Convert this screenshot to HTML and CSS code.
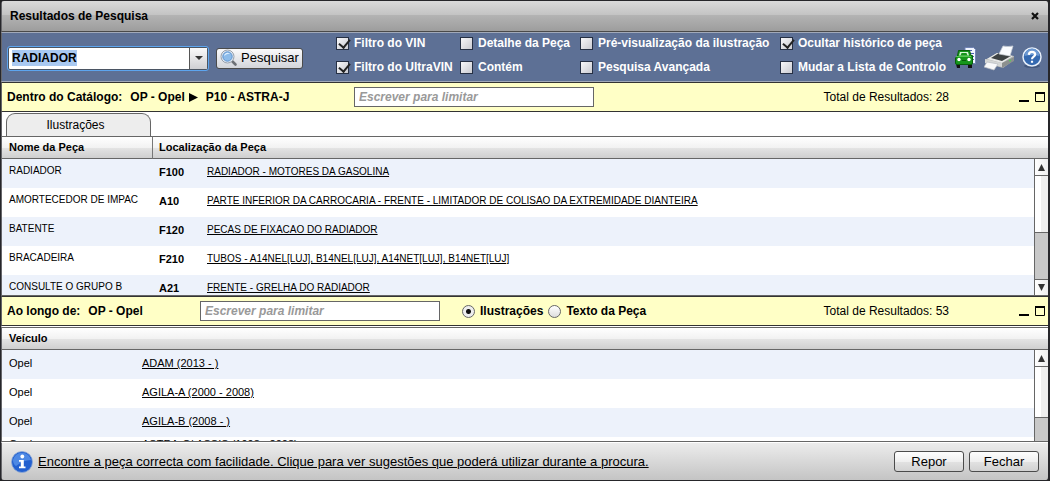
FILE: index.html
```html
<!DOCTYPE html>
<html lang="pt">
<head>
<meta charset="utf-8">
<title>Resultados de Pesquisa</title>
<link rel="stylesheet" href="styles.css">
</head>
<body>
<main class="dialog">
  <header class="titlebar">
    <h1 class="title">Resultados de Pesquisa</h1>
    <button class="icon-button" aria-label="Fechar janela">
      <svg width="8" height="8" viewBox="0 0 8 8"><path d="M1 1L7 7M7 1L1 7" stroke="#111" stroke-width="2.2"/></svg>
    </button>
  </header>

  <form class="toolbar">
    <div class="combo">
      <input class="combo-input" id="query" type="text" value="RADIADOR" aria-label="Pesquisa">
      <button class="combo-arrow" type="button" aria-label="Abrir lista">
        <svg width="8" height="4" viewBox="0 0 8 4"><path d="M0 0H8L4 4Z" fill="#333"/></svg>
      </button>
    </div>
    <button class="button search-button" type="button">
      <svg width="18" height="18" viewBox="0 0 18 18">
        <path d="M12 12L15.500 15.500" stroke="#6d7075" stroke-width="2.600" stroke-linecap="round"/>
        <circle cx="7.500" cy="7.500" r="6.500" fill="#e8edf3" stroke="#98a1ac"/>
        <circle cx="7.500" cy="7.500" r="4.700" fill="#8dbcea" stroke="#5c91cd"/>
        <path d="M4 7a3.600 3.600 0 0 1 6-2.400Q6.500 5 4 7Z" fill="#dceeff"/>
      </svg>
      Pesquisar
    </button>
    <div class="filters">
      <label class="choice"><input class="check" type="checkbox" checked>Filtro do VIN</label>
      <label class="choice"><input class="check" type="checkbox">Detalhe da Peça</label>
      <label class="choice"><input class="check" type="checkbox">Pré-visualização da ilustração</label>
      <label class="choice"><input class="check" type="checkbox" checked>Ocultar histórico de peça</label>
      <label class="choice"><input class="check" type="checkbox" checked>Filtro do UltraVIN</label>
      <label class="choice"><input class="check" type="checkbox">Contém</label>
      <label class="choice"><input class="check" type="checkbox">Pesquisa Avançada</label>
      <label class="choice"><input class="check" type="checkbox">Mudar a Lista de Controlo</label>
    </div>
    <div class="tools">
      <button class="icon-button" type="button" aria-label="Veículo">
        <svg width="22" height="22" viewBox="0 0 22 22">
          <path d="M10 0.500H18.500L20.500 2.500V16.500H10Z" fill="#f1f5ff" stroke="#7183b5"/>
          <path d="M12 3.500H17M15 6.500H19M17 9.500H19M18 12.500H19" stroke="#4964ad"/>
          <path d="M1 17H5V21H2ZM13 17H17V21H13Z" fill="#111"/>
          <path d="M3.500 3.500H14.500L16 8.500H17.500V16Q17.500 17.500 16 17.500H2Q0.500 17.500 0.500 16V11L2.500 9Z" fill="#16961b" stroke="#075f0a"/>
          <path d="M5 5H13L14 8.500H4Z" fill="#d8f6d7"/>
          <path d="M6.500 6H11.500L12.500 8.500H5.500Z" fill="#16961b"/>
          <path d="M1 9.500H16" stroke="#52ca4e"/>
          <circle cx="4" cy="12.500" r="1.700" fill="#fff"/><circle cx="14" cy="12.500" r="1.700" fill="#fff"/>
          <path d="M7 13.500H11" stroke="#075f0a"/>
        </svg>
      </button>
      <button class="icon-button" type="button" aria-label="Imprimir">
        <svg width="31" height="26" viewBox="0 0 31 26">
          <path d="M1 15L13 8L30 11V15L19 23L1 18Z" fill="#b3b5b4"/>
          <path d="M3 14L13 8L29 11L18 18Z" fill="#e8e9e8"/>
          <path d="M7 13L15 8L27 11L18 16Z" fill="#3d4244"/>
          <path d="M15 9L19 1Q24 2 29 1L26 11Z" fill="#fafcff" stroke="#c9ced6" stroke-width="0.700"/>
          <path d="M18 18L30 12V16L18 23Z" fill="#8c908e"/>
          <path d="M1 14L18 18V22L1 18Z" fill="#d5d7d6"/>
          <path d="M3 17L14 19L10 25L0 22Z" fill="#f8f9fa" stroke="#b7bcc2" stroke-width="0.700"/>
          <circle cx="26" cy="15.500" r="1" fill="#57ca5c"/>
        </svg>
      </button>
      <button class="icon-button" type="button" aria-label="Ajuda">
        <svg width="20" height="22" viewBox="0 0 20 22">
          <ellipse cx="10" cy="19" rx="8" ry="2" fill="#43587e"/>
          <circle cx="10" cy="10" r="9" fill="#3569b0" stroke="#e7effa" stroke-width="1.500"/>
          <path d="M2.500 9a7.500 7.500 0 0 1 15 0Q10 7 2.500 9Z" fill="#6b98d2"/>
          <path d="M6.800 7.800Q7 4.900 10 4.900T13.200 7.500C13.200 9.700 10 9.700 10 12.200M10 13.800V15.800" fill="none" stroke="#fff" stroke-width="2.200"/>
        </svg>
      </button>
    </div>
  </form>

  <section class="scope">
    <div class="crumbs crumbs-wide">
      <span class="scope-name">Dentro do Catálogo:</span>
      <span>OP - Opel</span>
      <svg class="crumb-arrow" width="9" height="9" viewBox="0 0 9 9"><path d="M0 0L9 4.500L0 9Z" fill="#000"/></svg>
      <span>P10 - ASTRA-J</span>
    </div>
    <input class="limit" type="text" placeholder="Escrever para limitar" aria-label="Limitar resultados do catálogo">
    <p class="total">Total de Resultados: 28</p>
    <div class="pane-buttons">
      <button class="icon-button" aria-label="Minimizar"><svg width="10" height="10" viewBox="0 0 10 10"><path d="M0 9H10" stroke="#000" stroke-width="2"/></svg></button>
      <button class="icon-button" aria-label="Maximizar"><svg width="10" height="10" viewBox="0 0 10 10"><path d="M.5 1V9.500H9.500V1" fill="none" stroke="#000"/><path d="M0 1H10" stroke="#000" stroke-width="2"/></svg></button>
    </div>
  </section>

  <nav class="tabs"><button class="tab">Ilustrações</button></nav>

  <section class="pane parts-pane">
    <div class="pane-body">
      <table class="grid parts">
        <colgroup><col class="col-name"><col class="col-code"><col></colgroup>
        <thead><tr><th>Nome da Peça</th><th class="divided" colspan="2">Localização da Peça</th></tr></thead>
        <tbody>
          <tr><td class="name">RADIADOR</td><td class="code">F100</td><td><a href="#">RADIADOR - MOTORES DA GASOLINA</a></td></tr>
          <tr><td class="name">AMORTECEDOR DE IMPAC</td><td class="code">A10</td><td><a href="#">PARTE INFERIOR DA CARROCARIA - FRENTE - LIMITADOR DE COLISAO DA EXTREMIDADE DIANTEIRA</a></td></tr>
          <tr><td class="name">BATENTE</td><td class="code">F120</td><td><a href="#">PECAS DE FIXACAO DO RADIADOR</a></td></tr>
          <tr><td class="name">BRACADEIRA</td><td class="code">F210</td><td><a href="#">TUBOS - A14NEL[LUJ], B14NEL[LUJ], A14NET[LUJ], B14NET[LUJ]</a></td></tr>
          <tr><td class="name">CONSULTE O GRUPO B</td><td class="code">A21</td><td><a href="#">FRENTE - GRELHA DO RADIADOR</a></td></tr>
        </tbody>
      </table>
    </div>
    <div class="scroll">
      <div class="scroll-cap"></div>
      <button class="scroll-step" aria-label="Subir"><svg width="7" height="7" viewBox="0 0 7 7"><path d="M3.500 0L7 7H0Z" fill="#333"/></svg></button>
      <div class="scroll-track"><div class="scroll-thumb"></div></div>
      <button class="scroll-step last" aria-label="Descer"><svg width="7" height="7" viewBox="0 0 7 7"><path d="M3.500 7L0 0H7Z" fill="#333"/></svg></button>
    </div>
  </section>

  <section class="scope">
    <div class="crumbs">
      <span class="scope-name">Ao longo de:</span>
      <span>OP - Opel</span>
    </div>
    <input class="limit" type="text" placeholder="Escrever para limitar" aria-label="Limitar resultados de veículos">
    <div class="modes">
      <label class="choice"><input class="radio" type="radio" name="mode" checked>Ilustrações</label>
      <label class="choice"><input class="radio" type="radio" name="mode">Texto da Peça</label>
    </div>
    <p class="total">Total de Resultados: 53</p>
    <div class="pane-buttons">
      <button class="icon-button" aria-label="Minimizar"><svg width="10" height="10" viewBox="0 0 10 10"><path d="M0 9H10" stroke="#000" stroke-width="2"/></svg></button>
      <button class="icon-button" aria-label="Maximizar"><svg width="10" height="10" viewBox="0 0 10 10"><path d="M.5 1V9.500H9.500V1" fill="none" stroke="#000"/><path d="M0 1H10" stroke="#000" stroke-width="2"/></svg></button>
    </div>
  </section>

  <section class="pane vehicles-pane">
    <div class="pane-body">
      <table class="grid vehicles">
        <colgroup><col class="col-make"><col></colgroup>
        <thead><tr><th colspan="2">Veículo</th></tr></thead>
        <tbody>
          <tr><td>Opel</td><td><a href="#">ADAM (2013 - )</a></td></tr>
          <tr><td>Opel</td><td><a href="#">AGILA-A (2000 - 2008)</a></td></tr>
          <tr><td>Opel</td><td><a href="#">AGILA-B (2008 - )</a></td></tr>
          <tr class="tight"><td>Opel</td><td><a href="#">ASTRA-G| ASSIS (1998 - 2008)</a></td></tr>
        </tbody>
      </table>
    </div>
    <div class="scroll">
      <div class="scroll-cap"></div>
      <button class="scroll-step" aria-label="Subir"><svg width="7" height="7" viewBox="0 0 7 7"><path d="M3.500 0L7 7H0Z" fill="#333"/></svg></button>
      <div class="scroll-track"><div class="scroll-thumb short"></div></div>
    </div>
  </section>

  <footer class="footer">
    <svg width="22" height="22" viewBox="0 0 22 22">
      <circle cx="11" cy="11" r="10.500" fill="#2360cf" stroke="#8ea9d5" stroke-width="0.800"/>
      <path d="M2 9a9.200 9.200 0 0 1 18 0Q12 9 5 15Q2 13 2 9Z" fill="#4d88e4"/>
      <circle cx="11.300" cy="5.500" r="1.900" fill="#fff"/>
      <path d="M8 9H12.800V15.500H14.500V17.200H8V15.500H9.800V10.700H8Z" fill="#fff"/>
    </svg>
    <a class="hint" href="#">Encontre a peça correcta com facilidade. Clique para ver sugestões que poderá utilizar durante a procura.</a>
    <button class="button">Repor</button>
    <button class="button">Fechar</button>
  </footer>
</main>
<script src="app.js"></script>
</body>
</html>
```

FILE: styles.css
```css
* { box-sizing: border-box; }
body {
  margin: 0;
  background: #222;
  color: #000;
  font: 12px/16px "Liberation Sans", Arial, sans-serif;
}
button, input { font: inherit; color: inherit; margin: 0; }
button { padding: 0; }
svg { display: block; flex: none; }
a { color: inherit; }

.dialog {
  height: 100vh;
  display: flex;
  flex-direction: column;
  border: solid #26262a;
  border-width: 1px 2px 1px 1px;
  border-radius: 4px;
  overflow: hidden;
}
.dialog > * { flex: none; border-left: 1px solid #66666a; }
.icon-button { display: flex; border: 0; background: none; }

.titlebar {
  height: 31px;
  display: flex;
  align-items: center;
  justify-content: space-between;
  padding: 0 9px 0 8px;
  background: linear-gradient(#dadada, #c4c4c4 45%, #b4b4b4 46%, #9d9d9d);
  border-bottom: 1px solid #4a4a4a;
}
.title { margin: 0; font-size: 12px; }

.toolbar {
  height: 50px;
  display: flex;
  align-items: center;
  padding: 0 6px;
  background: #5d7095;
  border-top: 1px solid #a1a9b9;
  border-bottom: 1px solid #a1a9b9;
}
.combo {
  width: 200px;
  height: 23px;
  display: flex;
  margin: 2px 8px 0 0;
  background: #fff;
  border: 1px solid #4b5563;
  outline: 1px solid #5da5ef;
  border-radius: 2px;
}
.combo-input {
  flex: 1;
  min-width: 0;
  padding: 0 3px;
  border: 0;
  outline: 0;
  background: none;
  font-weight: bold;
  caret-color: transparent;
}
.combo-input::selection { background: #a9c9f1; color: #000; }
.combo-arrow {
  width: 18px;
  display: flex;
  align-items: center;
  justify-content: center;
  border: 0;
  border-left: 1px solid #555;
  background: linear-gradient(#fafafa, #cfcfd3);
}
.button {
  height: 21px;
  display: flex;
  align-items: center;
  justify-content: center;
  font-size: 13px;
  border: 1px solid #4b4b4b;
  border-radius: 3px;
  background: linear-gradient(#fdfdfd, #efefef 50%, #e2e2e2 51%, #d2d2d2);
}
.search-button {
  width: 87px;
  gap: 3px;
  margin: 2px 33px 0 0;
  background: linear-gradient(#fafafb, #d3d5da);
}
.filters {
  flex: 1;
  display: grid;
  grid-template-columns: 124px 120px 200px 1fr;
  row-gap: 8px;
  margin-bottom: 4px;
  color: #fff;
}
.choice { display: flex; align-items: center; gap: 5px; font-weight: bold; white-space: nowrap; }
.check {
  appearance: none;
  flex: none;
  width: 13px;
  height: 13px;
  border: 1px solid #263044;
  background: linear-gradient(135deg, #f7f7f9, #cacbd1);
}
.check:checked::before {
  content: "";
  display: block;
  width: 5px;
  height: 9px;
  margin: -1px 0 0 4px;
  border: solid #222;
  border-width: 0 2px 2px 0;
  transform: rotate(40deg);
}
.tools { display: flex; align-items: center; gap: 7px; margin-top: 2px; }

.scope {
  height: 30px;
  display: flex;
  align-items: center;
  padding: 0 3px 0 5px;
  background: #ffffc6;
  border-top: 1px solid #333;
  border-bottom: 1px solid #333;
}
.crumbs { width: 193px; display: flex; align-items: center; font-weight: bold; }
.crumbs-wide { width: 347px; }
.scope-name { margin-right: 8px; }
.crumb-arrow { margin: 0 8px 0 4px; }
.limit {
  width: 240px;
  height: 20px;
  padding: 0 4px;
  border: 1px solid #666;
  background: #fff;
  font-weight: bold;
  font-style: italic;
}
.limit::placeholder { color: #999; opacity: 1; }
.modes { display: flex; gap: 5px; margin-left: 22px; }
.radio {
  appearance: none;
  width: 13px;
  height: 13px;
  border: 1px solid #666;
  border-radius: 50%;
  background: linear-gradient(#fff, #ddd);
}
.radio:checked { background: radial-gradient(circle, #111 0 2px, #eee 3px); }
.total { margin: 0 70px 0 auto; }
.pane-buttons { display: flex; gap: 6px; }

.tabs { height: 24px; display: flex; padding: 1px 0 0 4px; background: #fff; }
.tab {
  width: 145px;
  padding-right: 6px;
  border: 1px solid #666;
  border-bottom: 0;
  border-radius: 9px 9px 0 0;
  background: #ededed;
}

.pane { display: flex; overflow: hidden; background: #fff; font-size: 11px; line-height: 14px; border-bottom: 1px solid #666; }
.parts-pane { height: 160px; }
.vehicles-pane { flex: 1; min-height: 0; border-top: 1px solid #fff; }
.pane-body { flex: 1; min-width: 0; overflow: hidden; }
.grid { width: 100%; table-layout: fixed; border-collapse: separate; border-spacing: 0; }
.grid th, .scroll-cap {
  height: 23px;
  border: solid #666;
  border-width: 1px 0;
  background: linear-gradient(#fff, #f2f2f2 50%, #e4e4e4 51%, #cfcfcf);
}
.grid th { padding: 0 7px 2px; text-align: left; }
.grid th.divided { border-left: 1px solid #777; padding-left: 6px; }
.grid td { height: 29px; padding: 6px 0 0 7px; vertical-align: top; white-space: nowrap; }
.grid tbody tr:nth-child(odd) { background: #edf2fb; }
.grid .tight td { padding-top: 0; }
.col-name { width: 150px; }
.col-code { width: 48px; }
.col-make { width: 133px; }
.parts td { font-size: 10px; }
.parts td.name { padding-top: 5px; }
.parts td.code { font-size: 11px; font-weight: bold; }

.scroll { width: 14px; display: flex; flex-direction: column; }
.scroll-cap { flex: none; }
.scroll-step {
  height: 16px;
  flex: none;
  display: flex;
  align-items: center;
  justify-content: center;
  border: 0;
  border-left: 1px solid #666;
  background: linear-gradient(90deg, #fff, #eee);
}
.scroll-step.last { border-top: 1px solid #666; }
.scroll-track {
  flex: 1;
  min-height: 0;
  border-left: 1px solid #666;
  background: #c8c8c8;
}
.scroll-thumb {
  height: 58px;
  border: solid #666;
  border-width: 1px 0;
  background: linear-gradient(90deg, #fff 45%, #eee 46%);
}
.scroll-thumb.short { height: 52px; }

.footer {
  height: 38px;
  display: flex;
  align-items: center;
  gap: 5px;
  padding: 0 9px 0 9px;
  background: linear-gradient(#ececec, #c4c4c4);
  border-top: 1px solid #fff;
}
.hint { flex: 1; font-size: 13px; }
.footer .button { width: 70px; }
```

FILE: app.js
```js
const query = document.getElementById("query");
query.focus();
query.select();
```
